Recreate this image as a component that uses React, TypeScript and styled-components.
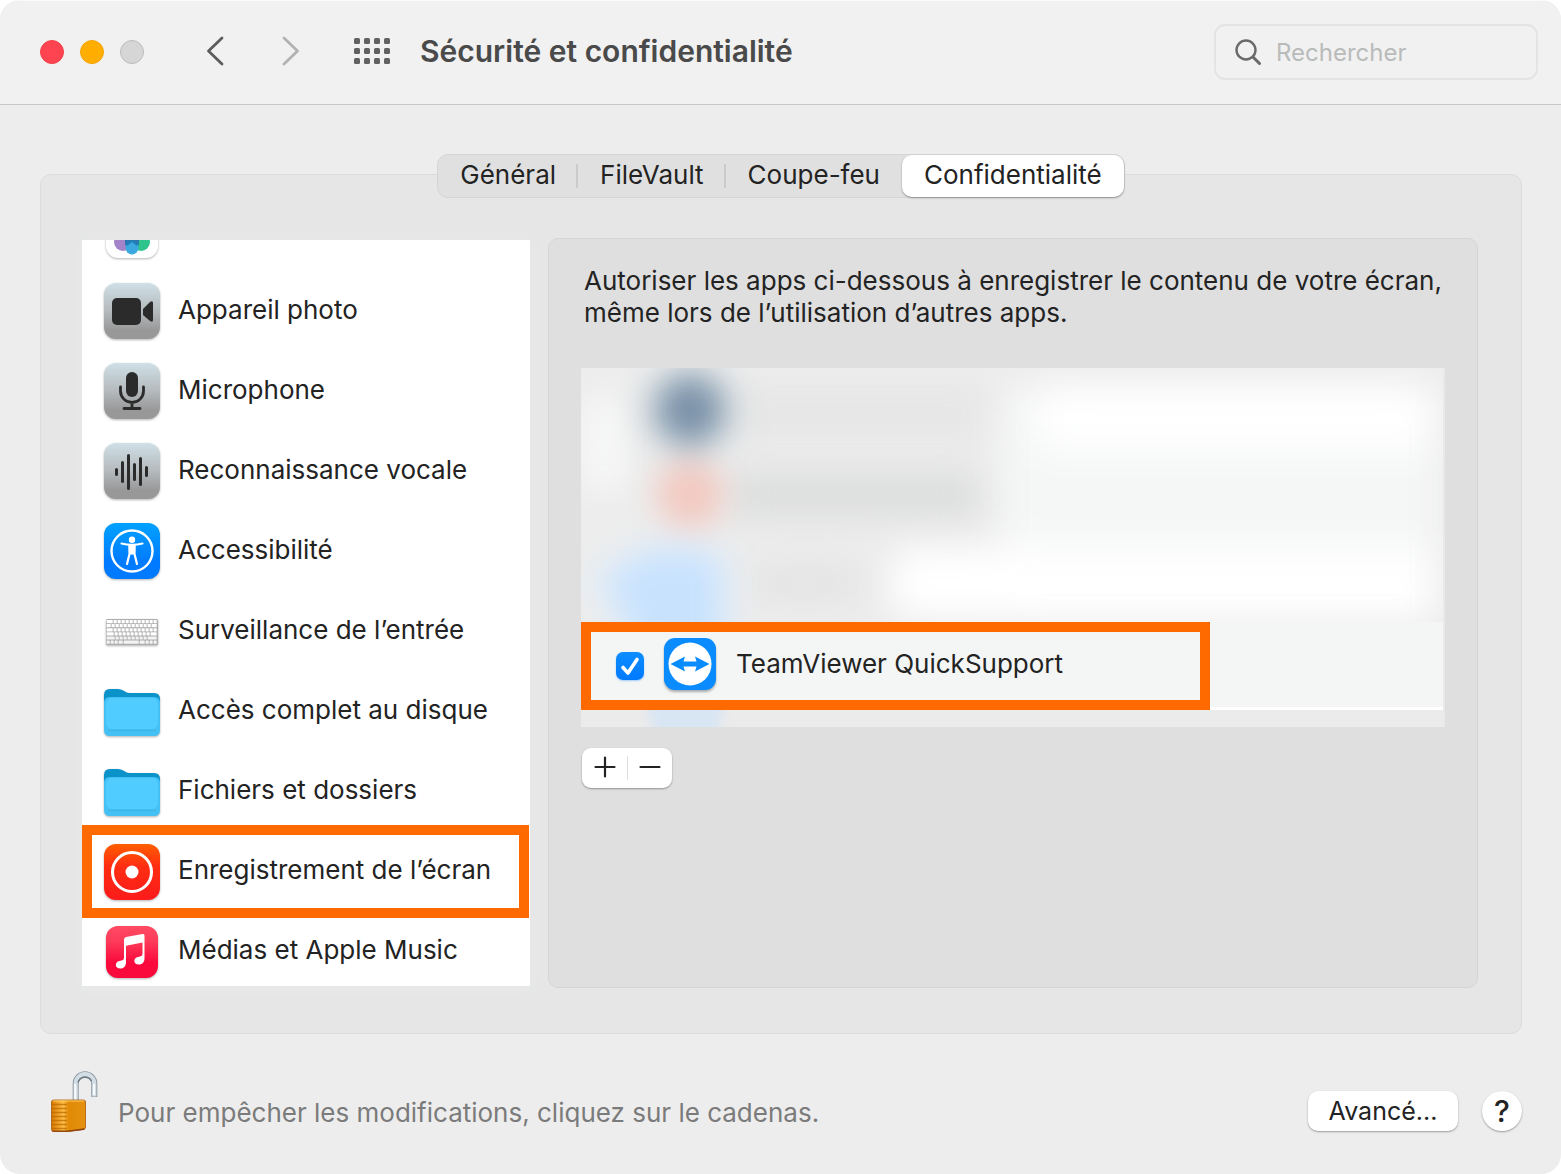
import React, { useState } from "react";
import styled, { createGlobalStyle, css } from "styled-components";

const GlobalStyle = createGlobalStyle`
  *, *::before, *::after { box-sizing: border-box; }
  html { background: #ffffff; }
  body {
    margin: 0;
    font-family: Inter, "Liberation Sans", sans-serif;
    font-size: 26px;
    line-height: 32px;
    color: #232323;
  }
  button, input { font: inherit; color: inherit; }
  h1, p, ul { margin: 0; padding: 0; }
  svg { display: block; }
`;

const Window = styled.div`
  display: flex;
  flex-direction: column;
  min-height: 100vh;
  background: #ededed;
  border-radius: 20px;
  overflow: hidden;
`;

const TitleBar = styled.header`
  display: flex;
  align-items: center;
  height: 105px;
  padding: 0 23px 2px 40px;
  background: #f1f1f1;
  border-top: 1px solid #fbfbfb;
  border-bottom: 1px solid #c6c8c7;
`;

const TrafficLights = styled.div`
  display: flex;
  gap: 16px;
`;

const Light = styled.button<{ $fill: string; $edge: string }>`
  width: 24px;
  height: 24px;
  padding: 0;
  border: 1px solid ${(p) => p.$edge};
  border-radius: 50%;
  background: ${(p) => p.$fill};
`;

const NavButtons = styled.nav`
  display: flex;
  align-items: center;
  gap: 51px;
  margin: 0 30px 0 60px;
  padding-bottom: 2px;
`;

const IconButton = styled.button`
  display: grid;
  place-items: center;
  padding: 0;
  border: 0;
  background: none;
`;

const Title = styled.h1`
  flex: 1;
  padding-bottom: 2px;
  font-size: 30px;
  font-weight: 600;
  line-height: 36px;
  color: #4a4a4a;
`;

const Search = styled.label`
  display: flex;
  align-items: center;
  gap: 14px;
  width: 324px;
  height: 56px;
  padding: 0 18px;
  border: 2px solid #e4e4e4;
  border-radius: 11px;
`;

const SearchInput = styled.input`
  flex: 1;
  min-width: 0;
  padding: 3px 0 0;
  border: 0;
  outline: 0;
  background: none;
  font-size: 24px;
  &::placeholder {
    color: #b9bbba;
    opacity: 1;
  }
`;

const Main = styled.main`
  display: flex;
  flex: 1;
  flex-direction: column;
  padding: 49px 39px 0 40px;
`;

const Tabs = styled.div`
  position: relative;
  display: flex;
  align-self: center;
  height: 44px;
  margin-bottom: -24px;
  border: 1px solid #d5d5d5;
  border-radius: 11px;
  background: #e0e0e0;
`;

const Tab = styled.button<{ $active: boolean; $divided: boolean }>`
  position: relative;
  height: 42px;
  padding: 0 22px 2px;
  border: 0;
  border-radius: 10px;
  background: none;
  ${(p) =>
    p.$active &&
    css`
      background: #ffffff;
      box-shadow: 0 1px 2px rgba(0, 0, 0, 0.35);
    `}
  ${(p) =>
    p.$divided &&
    css`
      &::after {
        content: "";
        position: absolute;
        right: 0;
        top: 9px;
        width: 2px;
        height: 24px;
        background: #cbcbcb;
      }
    `}
`;

const Panel = styled.section`
  display: grid;
  grid-template-columns: 448px minmax(0, 1fr);
  gap: 18px;
  padding: 63px 43px 45px 41px;
  border: 1px solid #dcdcdc;
  border-radius: 11px;
  background: #e6e6e6;
`;

const Sidebar = styled.div`
  align-self: center;
  overflow: hidden;
  background: #ffffff;
  box-shadow: 0 0 8px 4px #e6e8e7;
`;

const ServiceList = styled.ul`
  margin: -50px 0 -4px;
  list-style: none;
`;

const ServiceItem = styled.li<{ $marked: boolean }>`
  position: relative;
  ${(p) =>
    p.$marked &&
    css`
      &::after {
        content: "";
        position: absolute;
        inset: -5px 1px -8px 0;
        border: 10px solid #ff6a00;
        pointer-events: none;
      }
    `}
`;

const ServiceButton = styled.button`
  display: flex;
  align-items: center;
  gap: 18px;
  width: 100%;
  height: 80px;
  padding: 0 22px;
  border: 0;
  background: none;
  text-align: left;
  white-space: nowrap;
`;

const ServiceIcon = styled.svg`
  flex: none;
  width: 56px;
  height: 60px;
  overflow: visible;
  filter: drop-shadow(0 1px 1px rgba(0, 0, 0, 0.3));
`;

const Detail = styled.div`
  min-height: 750px;
  padding: 26px 32px;
  border: 1px solid #d5d5d5;
  border-radius: 10px;
  background: #dfdfdf;
`;

const Description = styled.p`
  padding-left: 3px;
  margin-bottom: 39px;
`;

const AppList = styled.div`
  overflow: hidden;
  border-right: 2px solid #e9e9e9;
  background: #ebebeb;
`;

const HiddenRows = styled.svg`
  width: 100%;
  height: 254px;
`;

const AppRow = styled.div`
  background: #f4f6f5;
  border-bottom: 3px solid #ffffff;
`;

const AppChoice = styled.label`
  position: relative;
  display: flex;
  align-items: center;
  gap: 20px;
  width: 629px;
  max-width: 100%;
  height: 88px;
  margin-bottom: -3px;
  padding: 0 25px;
  border: 10px solid #ff6a00;
  background: #f4f6f5;
`;

const AppName = styled.span`
  display: flex;
  align-items: center;
  gap: 20px;
  padding-bottom: 4px;
`;

const CheckBox = styled.span`
  position: relative;
  width: 28px;
  height: 28px;
`;

const CheckInput = styled.input`
  appearance: none;
  display: block;
  width: 28px;
  height: 28px;
  margin: 0;
  border: 1px solid #b5b5b5;
  border-radius: 7px;
  background: #ffffff;
  &:checked {
    border: 0;
    background: linear-gradient(#0d8dff, #007aff);
    box-shadow: 0 1px 2px rgba(0, 122, 255, 0.35);
  }
`;

const CheckMark = styled.svg`
  position: absolute;
  inset: 0;
  pointer-events: none;
`;

const AppIcon = styled.svg`
  filter: drop-shadow(0 2px 1px rgba(0, 0, 0, 0.3));
`;

const LastRow = styled.svg`
  width: 100%;
  height: 17px;
`;

const AddRemove = styled.div`
  display: inline-flex;
  align-items: center;
  height: 40px;
  margin: 21px 0 0 1px;
  border-radius: 9px;
  background: #ffffff;
  box-shadow: 0 1px 2px rgba(0, 0, 0, 0.35);
`;

const StepButton = styled(IconButton)`
  width: 45px;
  height: 24px;
  padding-bottom: 2px;
  & + & {
    border-left: 1px solid #dedede;
  }
`;

const Footer = styled.footer`
  display: flex;
  align-items: center;
  gap: 19px;
  padding: 36px 39px 40px 50px;
`;

const FooterText = styled.p`
  flex: 1;
  padding-top: 22px;
  color: #7b7b7b;
`;

const FooterActions = styled.div`
  display: flex;
  gap: 24px;
  padding-top: 18px;
`;

const PushButton = styled.button<{ $round?: boolean }>`
  height: 40px;
  padding: ${(p) => (p.$round ? "0" : "0 20px")};
  width: ${(p) => (p.$round ? "40px" : "150px")};
  border: 0;
  border-radius: ${(p) => (p.$round ? "50%" : "10px")};
  background: #ffffff;
  box-shadow: 0 1px 2px rgba(0, 0, 0, 0.35);
  font-size: ${(p) => (p.$round ? "30px" : "25px")};
  font-weight: ${(p) => (p.$round ? 500 : 400)};
`;

const GrayTile = () => (
  <>
    <defs>
      <linearGradient id="gray" x1="0" y1="0" x2="0" y2="1">
        <stop offset="0" stopColor="#cfe0e7" />
        <stop offset="0.5" stopColor="#b5babd" />
        <stop offset="0.85" stopColor="#989898" />
      </linearGradient>
    </defs>
    <rect y="3" width="56" height="56" rx="12" fill="url(#gray)" />
  </>
);

const PhotosIcon = () => (
  <ServiceIcon viewBox="0 0 56 60">
    <rect x="2" y="6" width="52" height="52" rx="12" fill="#fff" />
    <ellipse cx="28" cy="20" rx="6" ry="9" fill="#f7a530" />
    <circle cx="37" cy="29" r="8" fill="#a9cf46" />
    <circle cx="37" cy="42" r="9" fill="#2fc48d" />
    <circle cx="19" cy="42" r="9" fill="#a583c9" />
    <path d="M21 36h14v9l-7 2-7-2z" fill="#2b78ae" />
    <circle cx="28" cy="48" r="6.500" fill="#3ba9e0" />
    <path d="M22 43l6-3 6 3-1 3-5-4-5 4z" fill="#1f7fb8" />
  </ServiceIcon>
);

const CameraIcon = () => (
  <ServiceIcon viewBox="0 0 56 60">
    <GrayTile />
    <rect x="8" y="18" width="29" height="27" rx="5" fill="#2b2b2b" />
    <path d="M39 29l7-7q3-2 3 1v17q0 3-3 1l-7-6z" fill="#2b2b2b" />
  </ServiceIcon>
);

const MicIcon = () => (
  <ServiceIcon viewBox="0 0 56 60">
    <GrayTile />
    <rect x="22" y="12" width="12" height="25" rx="6" fill="#2b2b2b" />
    <path
      d="M16.500 27v4a11.500 11.500 0 0 0 23 0v-4M28 42.500V48M20 48.500h16"
      fill="none"
      stroke="#2b2b2b"
      strokeWidth="2.800"
      strokeLinecap="round"
    />
  </ServiceIcon>
);

const WaveIcon = () => (
  <ServiceIcon viewBox="0 0 56 60">
    <GrayTile />
    <path
      d="M12.500 29.500v5M18.500 22.500v19M24.500 15.500v33M30.500 24.500v15M36.500 18.500v26M42.500 27.500v8"
      stroke="#2b2b2b"
      strokeWidth="3"
      strokeLinecap="round"
    />
  </ServiceIcon>
);

const AccessibilityIcon = () => (
  <ServiceIcon viewBox="0 0 56 60">
    <defs>
      <linearGradient id="blue" x1="0" y1="0" x2="0" y2="1">
        <stop offset="0" stopColor="#00a2ff" />
        <stop offset="0.7" stopColor="#007aff" />
      </linearGradient>
    </defs>
    <rect y="3" width="56" height="56" rx="12" fill="url(#blue)" />
    <circle cx="28" cy="31" r="20.500" fill="none" stroke="#fff" strokeWidth="2.400" />
    <circle cx="28" cy="19.800" r="3.200" fill="#fff" />
    <path
      d="M17.500 23.500q5 1.300 10.500 1.300t10.500-1.300M25.500 26v8l-2.500 10M30.500 26v8l2.500 10"
      fill="none"
      stroke="#fff"
      strokeWidth="2.200"
      strokeLinecap="round"
      strokeLinejoin="round"
    />
    <path d="M24.500 24.500h7l-.5 10h-6z" fill="#fff" />
  </ServiceIcon>
);

const KEY_ROWS = [
  [0, 7, 11, 15, 19, 23, 27, 31, 35, 39, 43, 47],
  [0, 5, 9, 13, 17, 21, 25, 29, 33, 37, 41, 45],
  [0, 7, 11, 15, 19, 23, 27, 31, 35, 39, 43, 47],
  [0, 8, 12, 16, 20, 24, 28, 32, 36, 40, 44],
  [0, 9, 13, 17, 21, 25, 29, 33, 37, 41],
  [0, 4, 8, 12, 17, 33, 39, 43, 47],
];

const KeyboardIcon = () => (
  <ServiceIcon viewBox="0 0 56 60">
    <rect x="2" y="19" width="52" height="26" rx="1.500" fill="#adadad" />
    {KEY_ROWS.map((row, r) =>
      row.map((x, i) => (
        <rect
          key={`${r}-${i}`}
          x={2.6 + x}
          y={20 + r * 4.1}
          width={(row[i + 1] ?? 51) - x - 0.9}
          height={3.2}
          rx="0.400"
          fill={r > 3 ? "#f3f3f3" : "#ffffff"}
        />
      ))
    )}
  </ServiceIcon>
);

const FolderIcon = () => (
  <ServiceIcon viewBox="0 0 56 60">
    <path
      d="M0 15q0-6 6-6h8q4 0 7 2.500 2 1.500 5 1.500h24q6 0 6 6v12H0z"
      fill="#0a92c9"
    />
    <path d="M0 23q0-6 6-6h44q6 0 6 6v27q0 6-6 6H6q-6 0-6-6z" fill="#45c0f5" />
    <rect x="2" y="18" width="52" height="31" rx="6" fill="#50ccff" />
    <path d="M4 50.500h48" stroke="#3ab2e6" strokeWidth="1" />
  </ServiceIcon>
);

const RecordIcon = () => (
  <ServiceIcon viewBox="0 0 56 60">
    <defs>
      <linearGradient id="red" x1="0" y1="0" x2="0" y2="1">
        <stop offset="0" stopColor="#ff5e00" />
        <stop offset="0.4" stopColor="#ff2d12" />
        <stop offset="1" stopColor="#fb1b1b" />
      </linearGradient>
    </defs>
    <rect y="4" width="56" height="56" rx="12" fill="url(#red)" />
    <circle cx="28" cy="32" r="19.500" fill="none" stroke="#fff" strokeWidth="3" />
    <circle cx="28" cy="32" r="6.500" fill="#fff" />
  </ServiceIcon>
);

const MusicIcon = () => (
  <ServiceIcon viewBox="0 0 56 60">
    <defs>
      <linearGradient id="music" x1="0" y1="0" x2="0" y2="1">
        <stop offset="0" stopColor="#ff4a63" />
        <stop offset="0.3" stopColor="#fd3a59" />
        <stop offset="0.7" stopColor="#fa0a3c" />
      </linearGradient>
    </defs>
    <rect x="2" y="6" width="52" height="52" rx="12" fill="url(#music)" />
    <path
      d="M20 19.500q0-2 2-2.500L38.500 14q2-.5 2 1.500V38c0 4-2 6.500-5.500 6.500-6 0-6-6.500-1-7.500 3-.6 4.500-1 4.500-3.500V22.500L22 25.700v16.300c0 4-2 6.500-5.500 6.500-6 0-6-6.500-1-7.500 3-.6 4.500-1 4.500-3.500z"
      fill="#fff"
    />
  </ServiceIcon>
);

const LockIcon = () => (
  <svg width="49" height="64" viewBox="0 0 49 64">
    <defs>
      <linearGradient id="brass" x1="0" y1="0" x2="1" y2="0">
        <stop offset="0" stopColor="#d97a00" />
        <stop offset="0.35" stopColor="#ffbf45" />
        <stop offset="0.5" stopColor="#e08a06" />
        <stop offset="1" stopColor="#e59010" />
      </linearGradient>
    </defs>
    <path
      d="M25.700 32V13.500a9.300 9.300 0 0 1 18.600 0V27"
      fill="none"
      stroke="#8996a0"
      strokeWidth="6"
    />
    <path
      d="M25.700 32V13.500a9.300 9.300 0 0 1 18.600 0V26.500"
      fill="none"
      stroke="#d3dde4"
      strokeWidth="4.200"
    />
    <path
      d="M25.200 31V14M44 25V14"
      fill="none"
      stroke="#f8fcfe"
      strokeWidth="2"
    />
    <path
      d="M28 12.500a7.400 7.400 0 0 1 13.500-1.500"
      fill="none"
      stroke="#6d7b85"
      strokeWidth="1.600"
    />
    <path
      d="M1.500 32q0-2 2-2h30q2 0 2 2v25q0 2-2 2.500l-15 2h-15q-2 0-2-2z"
      fill="url(#brass)"
      stroke="#a85a08"
      strokeWidth="0.800"
    />
    <path
      d="M2 34.500h15M2 38.500h15M2 42.500h15M2 46.500h15M2 50.500h15M2 54.500h15M2 58.500h15"
      stroke="#b86500"
      strokeWidth="1.300"
      opacity="0.7"
    />
    <path d="M3 31h31" stroke="#ffd06a" strokeWidth="1.200" />
    <path d="M2.500 61.200h16l16-2.200" fill="none" stroke="#8b3e08" strokeWidth="1.300" />
  </svg>
);

const BlurredRows = () => (
  <HiddenRows viewBox="0 0 862 254" preserveAspectRatio="none" aria-hidden="true">
    <defs>
      <filter id="wide" x="-50%" y="-80%" width="200%" height="260%" colorInterpolationFilters="sRGB">
        <feGaussianBlur stdDeviation="18" />
      </filter>
      <filter id="soft" x="-80%" y="-80%" width="260%" height="260%" colorInterpolationFilters="sRGB">
        <feGaussianBlur stdDeviation="15" />
      </filter>
    </defs>
    <rect width="862" height="254" fill="#ededed" />
    <g filter="url(#wide)">
      <rect x="420" y="20" width="436" height="234" fill="#f5f7f6" />
      <rect x="456" y="16" width="396" height="66" rx="20" fill="#ffffff" />
      <rect x="310" y="180" width="542" height="70" rx="20" fill="#ffffff" />
      <rect x="8" y="30" width="32" height="90" fill="#fafcfb" />
      <rect x="150" y="20" width="260" height="50" fill="#e6e6e6" />
      <rect x="150" y="106" width="250" height="42" fill="#dadcdb" />
      <rect x="170" y="200" width="110" height="30" fill="#e2e2e2" />
    </g>
    <g filter="url(#soft)">
      <circle cx="109" cy="42" r="48" fill="#cdd6db" />
      <circle cx="109" cy="42" r="32" fill="#7a91a8" />
      <circle cx="109" cy="126" r="34" fill="#f2c9c1" />
      <path d="M8 212Q50 166 100 172Q160 174 152 220L150 290H52Z" fill="#dfecf9" />
      <path d="M28 212Q66 182 100 186Q144 184 136 220L138 290H66Z" fill="#c8e2fd" />
    </g>
  </HiddenRows>
);

const SERVICES = [
  { name: "", label: "Photos", Icon: PhotosIcon },
  { name: "Appareil photo", Icon: CameraIcon },
  { name: "Microphone", Icon: MicIcon },
  { name: "Reconnaissance vocale", Icon: WaveIcon },
  { name: "Accessibilité", Icon: AccessibilityIcon },
  { name: "Surveillance de l’entrée", Icon: KeyboardIcon },
  { name: "Accès complet au disque", Icon: FolderIcon },
  { name: "Fichiers et dossiers", Icon: FolderIcon },
  { name: "Enregistrement de l’écran", Icon: RecordIcon, marked: true },
  { name: "Médias et Apple Music", Icon: MusicIcon },
];

const TABS = ["Général", "FileVault", "Coupe-feu", "Confidentialité"];

export default function App() {
  const [tab, setTab] = useState(3);
  const [allowed, setAllowed] = useState(true);

  return (
    <>
      <GlobalStyle />
      <Window>
        <TitleBar>
          <TrafficLights>
            <Light aria-label="Fermer" $fill="#ff4451" $edge="#f5404a" />
            <Light aria-label="Réduire" $fill="#ffae00" $edge="#f2a604" />
            <Light aria-label="Agrandir" $fill="#d6d6d6" $edge="#bcbcbc" />
          </TrafficLights>
          <NavButtons>
            <IconButton aria-label="Précédent">
              <svg width="24" height="32" viewBox="0 0 24 32" fill="none" stroke="#5c5c5c" strokeWidth="2.800" strokeLinecap="round" strokeLinejoin="round">
                <path d="M18 3L4.500 16L18 29" />
              </svg>
            </IconButton>
            <IconButton aria-label="Suivant">
              <svg width="24" height="32" viewBox="0 0 24 32" fill="none" stroke="#b2b2b2" strokeWidth="2.800" strokeLinecap="round" strokeLinejoin="round">
                <path d="M5 3L18.500 16L5 29" />
              </svg>
            </IconButton>
            <IconButton aria-label="Tout afficher">
              <svg width="36" height="26" viewBox="0 0 36 26" fill="#616161">
                {[0, 10, 20].map((y) =>
                  [0, 10, 20, 30].map((x) => (
                    <rect key={`${x}-${y}`} x={x} y={y} width="6" height="6" rx="1.500" />
                  ))
                )}
              </svg>
            </IconButton>
          </NavButtons>
          <Title>Sécurité et confidentialité</Title>
          <Search>
            <svg width="28" height="28" viewBox="0 0 28 28" fill="none" stroke="#6a6a6a" strokeWidth="2.400" strokeLinecap="round">
              <circle cx="12" cy="12" r="9.500" />
              <path d="M19 19L25.500 25.500" strokeWidth="3" />
            </svg>
            <SearchInput aria-label="Rechercher" placeholder="Rechercher" />
          </Search>
        </TitleBar>

        <Main>
          <Tabs role="tablist">
            {TABS.map((name, i) => (
              <Tab
                key={name}
                role="tab"
                aria-selected={i === tab}
                $active={i === tab}
                $divided={i !== tab && i + 1 !== tab && i < TABS.length - 1}
                onClick={() => setTab(i)}
              >
                {name}
              </Tab>
            ))}
          </Tabs>
          <Panel>
            <Sidebar>
              <ServiceList>
                {SERVICES.map(({ name, label, Icon, marked }) => (
                  <ServiceItem key={name} $marked={!!marked}>
                    <ServiceButton aria-label={label}>
                      <Icon />
                      {name}
                    </ServiceButton>
                  </ServiceItem>
                ))}
              </ServiceList>
            </Sidebar>
            <Detail>
              <Description>
                Autoriser les apps ci-dessous à enregistrer le contenu de votre écran, même lors de
                l’utilisation d’autres apps.
              </Description>
              <AppList>
                <BlurredRows />
                <AppRow>
                  <AppChoice>
                    <CheckBox>
                      <CheckInput
                        type="checkbox"
                        checked={allowed}
                        onChange={(e) => setAllowed(e.target.checked)}
                      />
                      {allowed && (
                        <CheckMark width="28" height="28" viewBox="0 0 28 28" fill="none" stroke="#fff" strokeWidth="3.600" strokeLinecap="round" strokeLinejoin="round">
                          <path d="M7 15.500L12 21L21 7.500" />
                        </CheckMark>
                      )}
                    </CheckBox>
                    <AppName>
                      <AppIcon width="52" height="52" viewBox="0 0 52 52">
                        <rect width="52" height="52" rx="11" fill="#0a8cff" />
                        <circle cx="26" cy="26" r="21.500" fill="#fff" />
                        <path
                          d="M6.500 26L21 18.500L19.500 23.500H32.500L31 18.500L45.500 26L31 33.500L32.500 28.500H19.500L21 33.500Z"
                          fill="#0a8cff"
                        />
                      </AppIcon>
                      TeamViewer QuickSupport
                    </AppName>
                  </AppChoice>
                </AppRow>
                <LastRow viewBox="0 0 862 17" preserveAspectRatio="none" aria-hidden="true">
                  <defs>
                    <filter id="strip" x="-30%" y="-100%" width="160%" height="300%" colorInterpolationFilters="sRGB">
                      <feGaussianBlur stdDeviation="5" />
                    </filter>
                  </defs>
                  <rect width="862" height="17" fill="#ebebeb" />
                  <path d="M62 -14H146L134 30H76Z" fill="#d8e5f3" filter="url(#strip)" />
                </LastRow>
              </AppList>
              <AddRemove>
                <StepButton aria-label="Ajouter">
                  <svg width="22" height="22" viewBox="0 0 22 22" stroke="#232323" strokeWidth="2.200" strokeLinecap="round">
                    <path d="M1.500 11H20.500M11 1.500V20.500" />
                  </svg>
                </StepButton>
                <StepButton aria-label="Supprimer">
                  <svg width="22" height="22" viewBox="0 0 22 22" stroke="#232323" strokeWidth="2.200" strokeLinecap="round">
                    <path d="M1.500 11H20.500" />
                  </svg>
                </StepButton>
              </AddRemove>
            </Detail>
          </Panel>
        </Main>

        <Footer>
          <IconButton aria-label="Cadenas">
            <LockIcon />
          </IconButton>
          <FooterText>Pour empêcher les modifications, cliquez sur le cadenas.</FooterText>
          <FooterActions>
            <PushButton>Avancé...</PushButton>
            <PushButton $round aria-label="Aide">
              ?
            </PushButton>
          </FooterActions>
        </Footer>
      </Window>
    </>
  );
}
